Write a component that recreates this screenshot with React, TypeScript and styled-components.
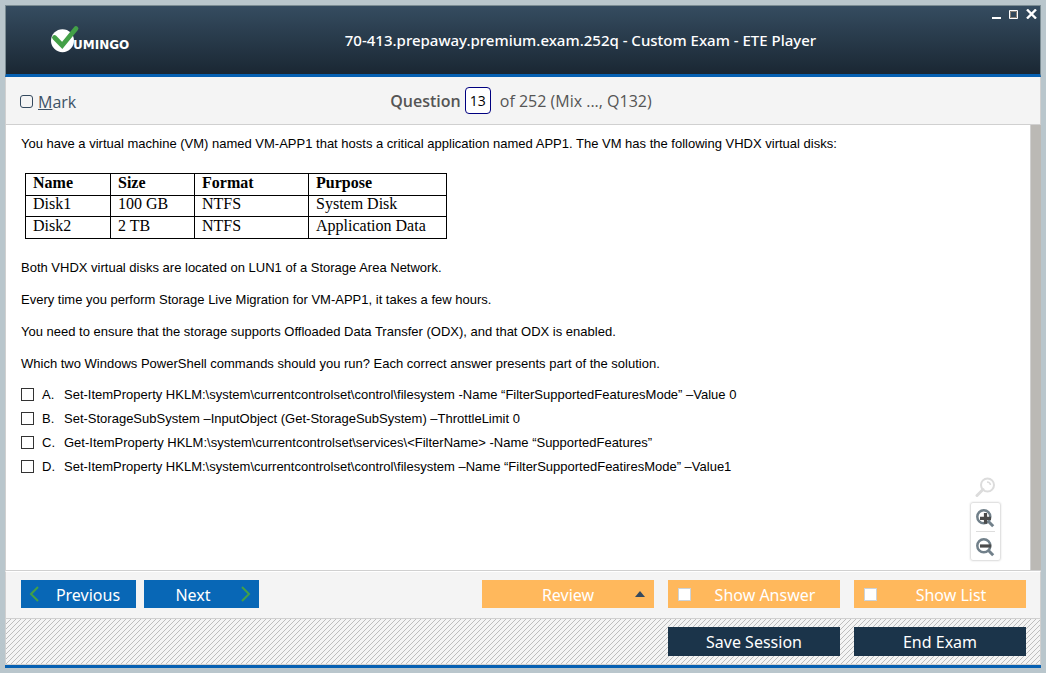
import React from "react";
import styled, { createGlobalStyle, css } from "styled-components";

const ui = `"Noto Sans", "Open Sans", sans-serif`;
const body = `"Liberation Sans", Arial, sans-serif`;

const GlobalStyle = createGlobalStyle`
  *, *::before, *::after { box-sizing: border-box; }
  body { margin: 0; background: #b9c6cc; }
  button, input { font: inherit; margin: 0; }
`;

const Desktop = styled.div`
  min-height: 100vh;
  display: flex;
  padding: 5px;
  background: #b9c6cc;
`;

const Frame = styled.div`
  flex: 1;
  min-width: 0;
  display: flex;
  flex-direction: column;
  border-bottom: 3px solid #0560b2;
`;

const Header = styled.header`
  position: relative;
  height: 72px;
  flex: none;
  display: flex;
  align-items: center;
  padding: 0 12px 0 45px;
  border: 1px solid #7b8c93;
  border-bottom: 3px solid #0560b2;
  background: linear-gradient(#354c60, #1a2733);
  color: #fff;
`;

const Logo = styled.svg`
  display: block;
  flex: none;
`;

const Title = styled.h1`
  flex: 1;
  margin: 0;
  text-align: center;
  font: 500 15px/24px ${ui};
  white-space: nowrap;
`;

const WindowControls = styled.div`
  position: absolute;
  top: 0;
  right: 0;
  display: flex;
`;

const WindowButton = styled.button`
  width: 17px;
  height: 16px;
  padding: 0;
  border: 0;
  background: none;
  color: #fff;
  display: grid;
  place-items: center;
`;

const QuestionBar = styled.div`
  height: 48px;
  flex: none;
  display: grid;
  grid-template-columns: 1fr auto 1fr;
  align-items: center;
  padding: 0 18px 0 14px;
  border: 1px solid #d0d0d0;
  border-top: 0;
  background: #f4f4f4;
  font: 400 16px/24px "Open Sans", sans-serif;
  color: #555;
`;

const MarkLabel = styled.label`
  display: flex;
  align-items: center;
  gap: 5px;
  padding-top: 2px;
  color: #3c5166;
`;

const Tick = styled.input<{ $kind: "mark" | "answer" | "button" }>`
  appearance: none;
  flex: none;
  width: 13px;
  height: 13px;
  background: #fff;
  ${({ $kind }) =>
    $kind === "mark"
      ? css`border: 1px solid #34495e; border-radius: 3px; background: #f4f4f4;`
      : $kind === "answer"
        ? css`border: 1px solid #333; margin-bottom: 1px;`
        : css`border: 1px solid #ccd2d8;`}
  &:checked { background: #34495e; }
`;

const Counter = styled.div`
  display: flex;
  align-items: center;
  white-space: nowrap;
`;

const CounterLabel = styled.label`
  font-weight: 600;
`;

const NumberBox = styled.input`
  width: 26px;
  height: 27px;
  margin: 0 9px 0 4px;
  padding: 0;
  border: 1px solid #000080;
  border-radius: 4px;
  background: #fff;
  color: #000;
  font-size: 14px;
  text-align: center;
`;

const Main = styled.main`
  position: relative;
  flex: 1;
  display: flex;
  border-left: 1px solid #d0d0d0;
  border-bottom: 1px solid #d0d0d0;
  background: #fff;
`;

const Content = styled.div`
  flex: 1;
  min-width: 0;
  padding: 11px 15px;
  font: 400 13px/16px ${body};
  color: #000;
`;

const ScrollTrack = styled.div`
  width: 11px;
  border-left: 1px solid #d0d0d0;
  background: #bbb9b5;
`;

const Paragraph = styled.p`
  margin: 0 0 16px;
`;

const DiskTable = styled.table`
  margin: 21px 0 21px 4px;
  border-collapse: collapse;
  table-layout: fixed;
  width: 421px;
  font: 400 16px/16px "Liberation Serif", "Times New Roman", serif;
  th, td {
    height: 22px;
    padding: 0 7px 4px;
    border: 1px solid #000;
    text-align: left;
    white-space: nowrap;
  }
  tbody tr:first-child td { height: 21px; }
`;

const Col = styled.col<{ $width: number }>`
  width: ${({ $width }) => $width}px;
`;

const Options = styled.ul`
  margin: 0;
  margin-top: -5px;
  padding: 0;
  list-style: none;
`;

const Option = styled.label`
  display: grid;
  grid-template-columns: 13px 14px 1fr;
  column-gap: 8px;
  align-items: center;
  height: 24px;
`;

const ZoomTools = styled.div`
  position: absolute;
  right: 40px;
  bottom: 9px;
  width: 31px;
  display: flex;
  flex-direction: column;
  align-items: center;
  gap: 4px;
`;

const ZoomBox = styled.div`
  width: 31px;
  height: 59px;
  border: 1px solid #e2e2e2;
  border-radius: 3px;
  box-shadow: 0 0 2px #ddd;
  padding: 0 5px;
`;

const ZoomButton = styled.button`
  display: grid;
  place-items: center;
  width: 100%;
  height: 28px;
  padding: 2px 0 0;
  border: 0;
  background: none;
  & + & { border-top: 1px solid #ddd; height: 29px; }
`;

const Toolbar = styled.div`
  height: 48px;
  flex: none;
  display: flex;
  align-items: center;
  gap: 8px;
  padding: 0 14px 2px 15px;
  border: 1px solid #d0d0d0;
  border-top-color: #fff;
  background: #f4f4f4;
`;

const Spacer = styled.div`
  flex: 1;
`;

const Group = styled.div`
  display: flex;
  gap: 14px;
`;

const bar = css`
  position: relative;
  height: 28px;
  display: flex;
  align-items: center;
  justify-content: center;
  padding: 2px 0 0;
  border: 0;
  color: #fff;
  font: 400 16px/24px ${ui};
  white-space: nowrap;
`;

const NavButton = styled.button<{ $side: "left" | "right" }>`
  ${bar}
  width: 115px;
  background: #0867b6;
  ${({ $side }) => ($side === "left" ? "padding-left: 19px;" : "padding-right: 17px;")}
  svg { position: absolute; top: 6px; ${({ $side }) => $side}: 8px; }
`;

const OrangeButton = styled.button`
  ${bar}
  width: 172px;
  background: #ffb85c;
  svg { position: absolute; right: 9px; top: 11px; }
`;

const OrangeToggle = styled.label`
  ${bar}
  width: 172px;
  padding-left: 22px;
  background: #ffb85c;
  input { position: absolute; left: 10px; top: 8px; }
`;

const BottomBar = styled.div`
  height: 46px;
  flex: none;
  display: flex;
  justify-content: flex-end;
  align-items: center;
  gap: 14px;
  padding-right: 14px;
  border: 1px solid #d0d0d0;
  border-top: 0;
  background: linear-gradient(135deg, #f4f4f4 45%, #bdbdbd 45% 55%, #f4f4f4 55%) 0 0 / 5px 5px;
`;

const DarkButton = styled.button`
  ${bar}
  width: 172px;
  height: 29px;
  padding: 0;
  background: #1b344a;
`;

const paragraphs = [
  "Both VHDX virtual disks are located on LUN1 of a Storage Area Network.",
  "Every time you perform Storage Live Migration for VM-APP1, it takes a few hours.",
  "You need to ensure that the storage supports Offloaded Data Transfer (ODX), and that ODX is enabled.",
  "Which two Windows PowerShell commands should you run? Each correct answer presents part of the solution.",
];

const options = [
  ["A.", "Set-ItemProperty HKLM:\\system\\currentcontrolset\\control\\filesystem -Name “FilterSupportedFeaturesMode” –Value 0"],
  ["B.", "Set-StorageSubSystem –InputObject (Get-StorageSubSystem) –ThrottleLimit 0"],
  ["C.", "Get-ItemProperty HKLM:\\system\\currentcontrolset\\services\\<FilterName> -Name “SupportedFeatures”"],
  ["D.", "Set-ItemProperty HKLM:\\system\\currentcontrolset\\control\\filesystem –Name “FilterSupportedFeatiresMode” –Value1"],
];

const disks = [
  ["Disk1", "100 GB", "NTFS", "System Disk"],
  ["Disk2", "2 TB", "NTFS", "Application Data"],
];

function Magnifier({ sign }: { sign: "plus" | "minus" }) {
  return (
    <svg width="19" height="19" viewBox="0 0 19 19" fill="none" aria-hidden="true">
      <circle cx="7.8" cy="7.8" r="6.5" stroke="#71808a" strokeWidth="2.5" />
      <path d="M12.5 12.5L17.2 17.2" stroke="#71808a" strokeWidth="3" />
      <path d={sign === "plus" ? "M4 9.300H15M9.500 4V14.800" : "M4 8H15.200"} stroke="#4b4b4b" strokeWidth="3.2" />
    </svg>
  );
}

export default function App() {
  return (
    <Desktop>
      <GlobalStyle />
      <Frame>
        <Header>
          <Logo width="82" height="30" viewBox="0 0 82 30" role="img" aria-label="Vumingo">
            <circle cx="11.5" cy="15.7" r="11.5" fill="#fff" />
            <path d="M3.500 12.500L11.200 20.500L25 3.500" fill="none" stroke="#43a047" strokeWidth="4.800" strokeLinecap="round" />
            <text x="22" y="24" fill="#fff" fontFamily="DejaVu Sans, sans-serif" fontSize="12" fontWeight="700">UMINGO</text>
          </Logo>
          <Title>70-413.prepaway.premium.exam.252q - Custom Exam - ETE Player</Title>
          <WindowControls>
            <WindowButton aria-label="Minimize">
              <svg width="11" height="11"><path d="M0 9H9" stroke="#fff" strokeWidth="2" /></svg>
            </WindowButton>
            <WindowButton aria-label="Maximize">
              <svg width="11" height="9"><path d="M0.500 0.500H8.500V8.500H0.500Z" fill="none" stroke="#fff" /><path d="M1.500 1.500H7.500V7.500H1.500Z" fill="none" stroke="#8a8278" /></svg>
            </WindowButton>
            <WindowButton aria-label="Close">
              <svg width="11" height="10"><path d="M1 0.500L10 9.500M10 0.500L1 9.500" stroke="#fff" strokeWidth="2.400" /></svg>
            </WindowButton>
          </WindowControls>
        </Header>

        <QuestionBar>
          <MarkLabel>
            <Tick type="checkbox" $kind="mark" />
            <span><u>M</u>ark</span>
          </MarkLabel>
          <Counter>
            <CounterLabel htmlFor="question-number">Question</CounterLabel>
            <NumberBox id="question-number" defaultValue="13" />
            <span>of 252 (Mix ..., Q132)</span>
          </Counter>
        </QuestionBar>

        <Main>
          <Content>
            <Paragraph>You have a virtual machine (VM) named VM-APP1 that hosts a critical application named APP1. The VM has the following VHDX virtual disks:</Paragraph>
            <DiskTable>
              <colgroup>
                <Col $width={85} /><Col $width={84} /><Col $width={114} /><Col $width={138} />
              </colgroup>
              <thead>
                <tr><th>Name</th><th>Size</th><th>Format</th><th>Purpose</th></tr>
              </thead>
              <tbody>
                {disks.map((row) => (
                  <tr key={row[0]}>{row.map((cell, i) => <td key={i}>{cell}</td>)}</tr>
                ))}
              </tbody>
            </DiskTable>
            {paragraphs.map((text) => <Paragraph key={text}>{text}</Paragraph>)}
            <Options>
              {options.map(([letter, text]) => (
                <li key={letter}>
                  <Option>
                    <Tick type="checkbox" $kind="answer" />
                    <span>{letter}</span>
                    <span>{text}</span>
                  </Option>
                </li>
              ))}
            </Options>
          </Content>
          <ScrollTrack />
          <ZoomTools>
            <svg width="21" height="21" viewBox="0 0 21 21" fill="none" stroke="#dcdcdc" aria-hidden="true">
              <circle cx="12.500" cy="8" r="6.500" strokeWidth="2" />
              <path d="M12 5Q15 5 15.500 8" strokeWidth="1.500" />
              <path d="M8 12.500L2 18.500" strokeWidth="3" strokeLinecap="round" />
            </svg>
            <ZoomBox>
              <ZoomButton aria-label="Zoom in"><Magnifier sign="plus" /></ZoomButton>
              <ZoomButton aria-label="Zoom out"><Magnifier sign="minus" /></ZoomButton>
            </ZoomBox>
          </ZoomTools>
        </Main>

        <Toolbar>
          <NavButton $side="left">
            <svg width="10" height="16" fill="none" stroke="#43a047" strokeWidth="2"><path d="M9 1L2 8L9 15" /></svg>
            Previous
          </NavButton>
          <NavButton $side="right">
            Next
            <svg width="10" height="16" fill="none" stroke="#43a047" strokeWidth="2"><path d="M1 1L8 8L1 15" /></svg>
          </NavButton>
          <Spacer />
          <Group>
            <OrangeButton>
              Review
              <svg width="10" height="6"><path d="M0 6L5 0L10 6Z" fill="#34495e" /></svg>
            </OrangeButton>
            <OrangeToggle><Tick type="checkbox" $kind="button" />Show Answer</OrangeToggle>
            <OrangeToggle><Tick type="checkbox" $kind="button" />Show List</OrangeToggle>
          </Group>
        </Toolbar>

        <BottomBar>
          <DarkButton>Save Session</DarkButton>
          <DarkButton>End Exam</DarkButton>
        </BottomBar>
      </Frame>
    </Desktop>
  );
}
